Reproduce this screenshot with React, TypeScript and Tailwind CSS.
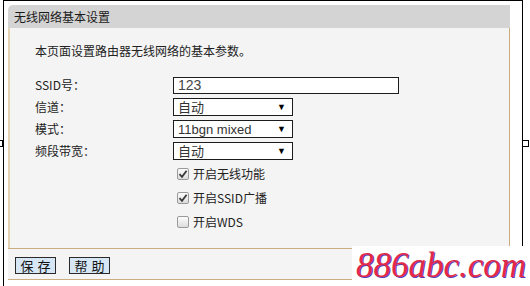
import React from "react";

// Router admin page: wireless basic settings panel.

const cjk = "font-['Noto_Sans_CJK_SC',sans-serif]";
const latin = "font-['Liberation_Sans','Noto_Sans_CJK_SC',sans-serif]";

function Select({ value }: { value: string }) {
  return (
    <div
      className={`flex h-[18px] w-[120px] items-center justify-between border border-[#1c1c1c] bg-white pl-[4px] pr-[6px] text-[13px] text-[#333] ${latin}`}
    >
      <span className="leading-none">{value}</span>
      <span className="text-[9px] leading-none text-black">▼</span>
    </div>
  );
}

function Check({ checked, label }: { checked: boolean; label: string }) {
  return (
    <div className="flex h-[24px] items-center">
      <div className="ml-[4px] flex h-[12px] w-[12px] items-center justify-center rounded-[2px] border border-[#9a9a9a] bg-gradient-to-b from-[#fdfdfd] to-[#dcdcdc]">
        {checked && (
          <svg width="10" height="10" viewBox="0 0 10 10">
            <path d="M1.5 5.2 L4 7.8 L8.6 1.8" fill="none" stroke="#3a3a3a" strokeWidth="1.8" />
          </svg>
        )}
      </div>
      <span className={`ml-[4px] text-[12px] text-[#222] ${cjk}`}>{label}</span>
    </div>
  );
}

function Row({ label, children }: { label: string; children: React.ReactNode }) {
  return (
    <div className="flex h-[18px] items-center">
      <span className={`w-[138px] text-[12px] text-[#222] ${cjk}`}>{label}</span>
      {children}
    </div>
  );
}

export default function App() {
  return (
    <div className="relative h-[286px] w-[530px] overflow-hidden bg-white">
      <div className="ml-[3px] h-[300px] w-[520px] border-x border-t border-black pl-[4px] pt-[4px]">
        <div className="w-[502px]">
          {/* title bar */}
          <div className={`flex h-[23px] items-center rounded-tl-[5px] bg-[#d4d4d4] pl-[6px] text-[12px] text-[#1a1a1a] ${cjk}`}>
            无线网络基本设置
          </div>

          {/* body */}
          <div className="flex h-[220px] flex-col border-l-2 border-r border-l-[#e4d3b2] border-r-[#c9ab7c] bg-[#f4f4f4] pl-[25px] pt-[15px]">
            <p className={`text-[12px] leading-[16px] text-[#222] ${cjk}`}>
              本页面设置路由器无线网络的基本参数。
            </p>

            <div className="mt-[17px] flex flex-col gap-[4px]">
              <Row label="SSID号：">
                <div className={`flex h-[17px] w-[226px] items-center border border-[#1c1c1c] bg-white pl-[4px] text-[14px] text-[#444] ${latin}`}>
                  123
                </div>
              </Row>
              <Row label="信道：">
                <Select value="自动" />
              </Row>
              <Row label="模式：">
                <Select value="11bgn mixed" />
              </Row>
              <Row label="频段带宽：">
                <Select value="自动" />
              </Row>
            </div>

            <div className="mt-[2px] flex flex-col pl-[138px]">
              <Check checked label="开启无线功能" />
              <Check checked label="开启SSID广播" />
              <Check checked={false} label="开启WDS" />
            </div>
          </div>

          {/* button bar */}
          <div className="flex h-[32px] gap-[13px] border-y border-[#cbad80] bg-[#f4f4f4] pl-[7px] pt-[8px]">
            {["保存", "帮助"].map((t) => (
              <div
                key={t}
                className={`flex h-[17px] w-[41px] items-center justify-center border border-[#2a2a2a] bg-[#d6e6f5] pl-[4px] text-[13px] tracking-[4px] text-[#111] ${cjk}`}
              >
                {t}
              </div>
            ))}
          </div>
        </div>
      </div>

      {/* frame resize handles */}
      <div className="absolute left-[-4px] top-[140px] h-[7px] w-[7px] border border-black bg-white" />
      <div className="absolute left-[522px] top-[140px] h-[7px] w-[7px] border border-black bg-white" />

      {/* watermark */}
      <div className="absolute left-[352px] top-[246px] flex h-[40px] w-[178px] items-end bg-white pb-[3px] pl-[4px]">
        <span className="font-['Liberation_Serif',serif] text-[35px] italic leading-none text-[#e22a46] [text-shadow:1px_1px_0_#5b3fb8]">
          886abc.com
        </span>
      </div>
    </div>
  );
}
